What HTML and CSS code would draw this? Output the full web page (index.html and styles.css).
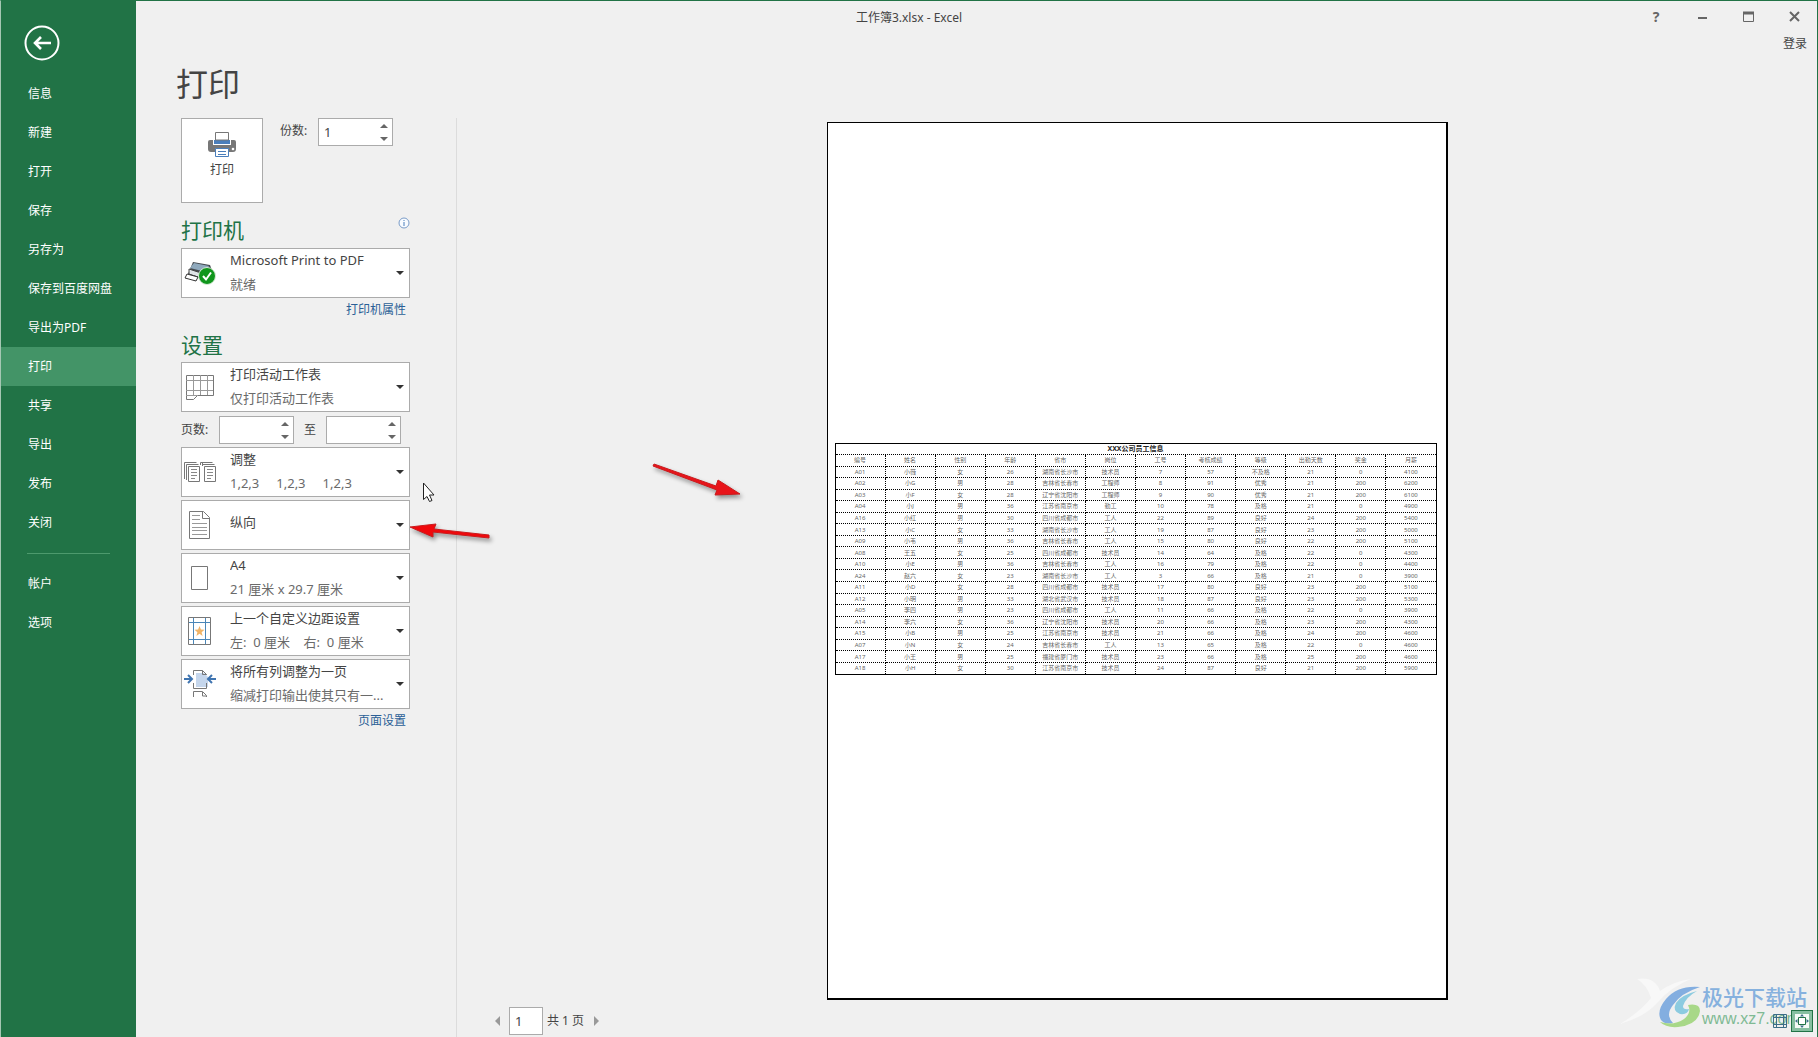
FILE: index.html
```html
<!DOCTYPE html>
<html lang="zh-CN">
<head>
<meta charset="utf-8">
<title>工作簿3.xlsx - Excel</title>
<link rel="stylesheet" href="styles.css">
</head>
<body>
<div class="window">
  <header class="titlebar">
    <span class="doc-title">工作簿3.xlsx - Excel</span>
    <div class="window-controls">
      <button type="button" aria-label="帮助" class="help">?</button>
      <button type="button" aria-label="最小化"><svg width="11" height="11" viewBox="0 0 11 11"><path d="M1 7h9" stroke="#666" stroke-width="2"/></svg></button>
      <button type="button" aria-label="最大化"><svg width="11" height="11" viewBox="0 0 11 11"><path d="M.5 1v9.500h10V1" fill="none" stroke="#666"/><path d="M0 2h11" stroke="#666" stroke-width="3"/></svg></button>
      <button type="button" aria-label="关闭"><svg width="11" height="11" viewBox="0 0 11 11"><path d="M1 1l9 9M10 1l-9 9" stroke="#666" stroke-width="2"/></svg></button>
    </div>
  </header>

  <nav class="sidebar">
    <button type="button" class="back" aria-label="返回"><svg width="36" height="36" viewBox="0 0 36 36" fill="none" stroke="#fff"><circle cx="18" cy="18" r="16.500" stroke-width="2"/><path d="M27 18H11M17 12l-6 6 6 6" stroke-width="2.600"/></svg></button>
    <a href="#">信息</a>
    <a href="#">新建</a>
    <a href="#">打开</a>
    <a href="#">保存</a>
    <a href="#">另存为</a>
    <a href="#">保存到百度网盘</a>
    <a href="#">导出为PDF</a>
    <a href="#" class="active">打印</a>
    <a href="#">共享</a>
    <a href="#">导出</a>
    <a href="#">发布</a>
    <a href="#">关闭</a>
    <hr>
    <a href="#">帐户</a>
    <a href="#">选项</a>
  </nav>

  <div class="page-head">
    <h1>打印</h1>
    <a href="#" class="login">登录</a>
  </div>

  <main class="content">
    <form class="settings">
      <div class="print-row">
        <button type="button" class="print-button">
          <svg width="28" height="26" viewBox="0 0 28 26"><path d="M2 8h24q2 0 2 2v7q0 3-3 3H3q-3 0-3-3v-7q0-2 2-2z" fill="#777"/><path d="M5 7h18v6H5z" fill="#fff"/><path d="M6 8h16v4H6z" fill="#4a7ebb"/><path d="M7.500.5h13V8h-13z" fill="#fff" stroke="#777"/><path d="M7.500 16.500h13v8h-13z" fill="#fff" stroke="#4a7ebb"/><path d="M10 19.500h8M10 22.500h8" stroke="#4a7ebb"/><circle cx="25" cy="17" r="1.300" fill="#fff"/></svg>
          <span>打印</span>
        </button>
        <label for="copies">份数:</label>
        <div class="spin">
          <input id="copies" type="number" value="1" min="1">
          <button type="button" class="up" aria-label="增加份数"></button>
          <button type="button" class="down" aria-label="减少份数"></button>
        </div>
      </div>

      <div class="section-head">
        <h2>打印机</h2>
        <svg width="12" height="12" viewBox="0 0 12 12"><circle cx="6" cy="6" r="5" fill="#f8fbff" stroke="#7a9cc8"/><path d="M6 5v4M6 3v1" stroke="#4a7ebb"/></svg>
      </div>
      <div class="picker">
        <svg class="icon" width="34" height="30" viewBox="0 0 34 30"><path d="M10 4l17 3 3 8-8 7-17-6z" fill="#454b50"/><path d="M11 5l15 3-3 6-16-4z" fill="#8fa9bd"/><path d="M6 11l15 5v5L6 16z" fill="#dfe4e7" stroke="#444"/><path d="M4 16l11 3-2 4-11-3z" fill="#fff" stroke="#333"/><circle cx="24" cy="18" r="8.500" fill="#10961c" stroke="#d8ead8"/><path d="M20 18l3 3.500 5-7" fill="none" stroke="#fff" stroke-width="2"/></svg>
        <select aria-label="打印机"><option>Microsoft Print to PDF</option></select>
        <span class="detail">就绪</span>
      </div>
      <a href="#" class="more">打印机属性</a>

      <div class="section-head"><h2>设置</h2></div>
      <div class="picker">
        <svg class="icon" width="34" height="30" viewBox="0 0 34 30" fill="none" stroke="#777"><path d="M3.500 3.500h27v20h-16l-4 4h-7z" fill="#fff"/><path d="M3 8.500h27M3 18.500h27M10.500 3v20M17.500 3v20M24.500 3v20M3 23.500h11" stroke="#999"/></svg>
        <select aria-label="打印范围"><option>打印活动工作表</option></select>
        <span class="detail">仅打印活动工作表</span>
      </div>
      <div class="range-row">
        <label for="from">页数:</label>
        <div class="spin">
          <input id="from" type="number">
          <button type="button" class="up" aria-label="增加起始页"></button>
          <button type="button" class="down" aria-label="减少起始页"></button>
        </div>
        <label for="to">至</label>
        <div class="spin">
          <input id="to" type="number">
          <button type="button" class="up" aria-label="增加结束页"></button>
          <button type="button" class="down" aria-label="减少结束页"></button>
        </div>
      </div>
      <div class="picker-list">
        <div class="picker">
          <svg class="icon" width="34" height="30" viewBox="0 0 34 30" fill="none" stroke="#777"><path d="M1.500 22V5.500h12M3.500 23V7.500h12M5.500 9.500h11v15h-11zM19.500 5.500h10M19.500 7.500h12M19.500 9V5M21.500 9.500h11v15h-11zM17.500 8V5.500h3"/><path d="M8 12.500h6M8 15.500h6M8 18.500h6M8 21.500h4M24 12.500h6M24 15.500h6M24 18.500h6M24 21.500h4" stroke="#888"/></svg>
          <select aria-label="调整"><option>调整</option></select>
          <span class="detail triple"><span>1,2,3</span><span>1,2,3</span><span>1,2,3</span></span>
        </div>
        <div class="picker single">
          <svg class="icon" width="34" height="30" viewBox="0 0 34 30" fill="none" stroke="#777"><path d="M6.500 1.500h14l6 6v21h-20zM19.500 1.500v7h7"/><path d="M9 5.500h8M9 9.500h8M9 13.500h15M9 17.500h15M9 20.500h15M9 24.500h15" stroke="#999"/></svg>
          <select aria-label="方向"><option>纵向</option></select>
        </div>
        <div class="picker">
          <svg class="icon" width="34" height="30" viewBox="0 0 34 30" fill="#fff" stroke="#777"><path d="M8.500 3.500h16v23h-16z"/></svg>
          <select aria-label="纸张"><option>A4</option></select>
          <span class="detail">21 厘米 x 29.7 厘米</span>
        </div>
        <div class="picker">
          <svg class="icon" width="34" height="30" viewBox="0 0 34 30" fill="none"><path d="M5.500 1.500h22v27h-22z" stroke="#777"/><path d="M10.500 2v26M22.500 2v26M6 6.500h21M6 23.500h21" stroke="#4a86b8"/><path d="M16.500 10l1.400 3.600 3.600.2-2.900 2.400 1 3.800-3.100-2.200-3.100 2.200 1-3.800-2.900-2.400 3.600-.2z" fill="#f0b468"/></svg>
          <select aria-label="边距"><option>上一个自定义边距设置</option></select>
          <span class="detail">左:&nbsp; 0 厘米&nbsp; &nbsp; 右:&nbsp; 0 厘米</span>
        </div>
        <div class="picker">
          <svg class="icon" width="34" height="30" viewBox="0 0 34 30" fill="none"><path d="M13 4h8l4 4v10H13z" fill="#c5d6ec"/><path d="M10.500 6V1.500h9l4 4V6M19.500 1.500v4h4M10.500 14v5.500h13V14M10.500 28v-5.500h9l4 4V28M19.500 23v4h4" stroke="#777"/><path d="M1 10h7M5 6l4 4-4 4M33 10h-7M29 6l-4 4 4 4" stroke="#3f74b0" stroke-width="2"/></svg>
          <select aria-label="缩放"><option>将所有列调整为一页</option></select>
          <span class="detail">缩减打印输出使其只有一...</span>
        </div>
      </div>
      <a href="#" class="more">页面设置</a>
    </form>

    <section class="preview">
      <div class="sheet">
        <table>
          <thead>
            <tr><th colspan="12" class="caption">XXX公司员工信息</th></tr>
            <tr><th>编号</th><th>姓名</th><th>性别</th><th>年龄</th><th>省市</th><th>岗位</th><th>工号</th><th>考核成绩</th><th>等级</th><th>出勤天数</th><th>奖金</th><th>月薪</th></tr>
          </thead>
          <tbody>
            <tr><td>A01</td><td>小薇</td><td>女</td><td>26</td><td>湖南省长沙市</td><td>技术员</td><td>7</td><td>57</td><td>不及格</td><td>21</td><td>0</td><td>4100</td></tr>
            <tr><td>A02</td><td>小G</td><td>男</td><td>28</td><td>吉林省长春市</td><td>工程师</td><td>8</td><td>91</td><td>优秀</td><td>21</td><td>200</td><td>6200</td></tr>
            <tr><td>A03</td><td>小F</td><td>女</td><td>28</td><td>辽宁省沈阳市</td><td>工程师</td><td>9</td><td>90</td><td>优秀</td><td>21</td><td>200</td><td>6100</td></tr>
            <tr><td>A04</td><td>小J</td><td>男</td><td>36</td><td>江苏省南京市</td><td>勤工</td><td>10</td><td>78</td><td>及格</td><td>21</td><td>0</td><td>4900</td></tr>
            <tr><td>A16</td><td>小红</td><td>男</td><td>30</td><td>四川省成都市</td><td>工人</td><td>22</td><td>89</td><td>良好</td><td>24</td><td>200</td><td>5400</td></tr>
            <tr><td>A13</td><td>小C</td><td>女</td><td>33</td><td>湖南省长沙市</td><td>工人</td><td>19</td><td>87</td><td>良好</td><td>23</td><td>200</td><td>5000</td></tr>
            <tr><td>A09</td><td>小韦</td><td>男</td><td>36</td><td>吉林省长春市</td><td>工人</td><td>15</td><td>80</td><td>良好</td><td>22</td><td>200</td><td>5100</td></tr>
            <tr><td>A08</td><td>王五</td><td>女</td><td>25</td><td>四川省成都市</td><td>技术员</td><td>14</td><td>64</td><td>及格</td><td>22</td><td>0</td><td>4300</td></tr>
            <tr><td>A10</td><td>小E</td><td>男</td><td>36</td><td>吉林省长春市</td><td>工人</td><td>16</td><td>79</td><td>及格</td><td>22</td><td>0</td><td>4400</td></tr>
            <tr><td>A24</td><td>赵六</td><td>女</td><td>23</td><td>湖南省长沙市</td><td>工人</td><td>3</td><td>66</td><td>及格</td><td>21</td><td>0</td><td>3900</td></tr>
            <tr><td>A11</td><td>小D</td><td>女</td><td>28</td><td>四川省成都市</td><td>技术员</td><td>17</td><td>80</td><td>良好</td><td>23</td><td>200</td><td>5100</td></tr>
            <tr><td>A12</td><td>小明</td><td>男</td><td>33</td><td>湖北省武汉市</td><td>技术员</td><td>18</td><td>87</td><td>良好</td><td>23</td><td>200</td><td>5300</td></tr>
            <tr><td>A05</td><td>李四</td><td>男</td><td>23</td><td>四川省成都市</td><td>工人</td><td>11</td><td>66</td><td>及格</td><td>22</td><td>0</td><td>3900</td></tr>
            <tr><td>A14</td><td>李六</td><td>女</td><td>36</td><td>辽宁省沈阳市</td><td>技术员</td><td>20</td><td>66</td><td>及格</td><td>23</td><td>200</td><td>4300</td></tr>
            <tr><td>A15</td><td>小B</td><td>男</td><td>25</td><td>江苏省南京市</td><td>技术员</td><td>21</td><td>66</td><td>及格</td><td>24</td><td>200</td><td>4600</td></tr>
            <tr><td>A07</td><td>小N</td><td>女</td><td>24</td><td>吉林省长春市</td><td>工人</td><td>13</td><td>65</td><td>及格</td><td>22</td><td>0</td><td>4600</td></tr>
            <tr><td>A17</td><td>小王</td><td>男</td><td>25</td><td>福建省厦门市</td><td>技术员</td><td>23</td><td>66</td><td>及格</td><td>25</td><td>200</td><td>4600</td></tr>
            <tr><td>A18</td><td>小H</td><td>女</td><td>30</td><td>江苏省南京市</td><td>技术员</td><td>24</td><td>87</td><td>良好</td><td>21</td><td>200</td><td>5900</td></tr>
          </tbody>
        </table>
      </div>
      <div class="pager">
        <button type="button" class="prev" aria-label="上一页"></button>
        <input id="page" type="text" value="1">
        <label for="page">共 1 页</label>
        <button type="button" class="next" aria-label="下一页"></button>
        <div class="view-tools">
          <button type="button" aria-label="显示边距"><svg width="14" height="14" viewBox="0 0 14 14" fill="none" stroke="#3d6e87"><path d="M.5.5h13v13H.5zM3.500 0v14M10.500 0v14M0 3.500h14M0 10.500h14"/></svg></button>
          <button type="button" class="on" aria-label="缩放到页面"><svg width="14" height="14" viewBox="0 0 14 14"><path d="M0 0h14v14H0z" fill="#f4faf6"/><path d="M3.500 3.500h7v7h-7z" fill="#fff" stroke="#217346"/><path d="M7 0l2 2.500H5zM7 14l2-2.500H5zM0 7l2.500-2v4zM14 7l-2.500-2v4z" fill="#3d6e87"/></svg></button>
        </div>
      </div>
    </section>
  </main>

  <div class="watermark">
    <svg width="86" height="60" viewBox="0 0 86 60"><path d="M17 4q18-3 23 12Q54 6 71 4 51 12 38 27 25 42 0 49q20-12 31-26Q27 10 17 4z" fill="#fff" opacity=".5"/><path d="M80 12Q58 10 46 24 36 36 41 45q4 5 12 3-8-8 0-18Q61 18 80 12z" fill="#83aee0"/><path d="M77 16q-16 4-21 12-4 8 4 11 8 1 9-5-6 1-6-3 3-9 14-15z" fill="#8ccbe0"/><path d="M68 30q12-2 12 6-2 14-22 16-12 1-18-5 14 4 24-3 8-6 4-14z" fill="#a8d888"/></svg>
    <div><b>极光下载站</b><span>www.xz7.com</span></div>
  </div>
  <svg class="cursor" width="14" height="20" viewBox="0 0 14 20"><path d="M2.500 1v16.500l3.500-3 2.500 5 2.500-1-2.500-5.500h4.500z" fill="#fff" stroke="#222"/></svg>
  <svg class="note note-sheet" width="104" height="52" viewBox="0 0 104 52"><path d="M5 5l62 22 2-6 22 14-25 1 2-5L4 7z" fill="#e8141a" stroke="#c81a1c"/></svg>
  <svg class="note note-orientation" width="96" height="34" viewBox="0 0 96 34"><path d="M4 8l26-3-2 5 55 6v3l-56-6 0 5z" fill="#f0080c" stroke="#c81a1c"/></svg>
</div>
</body>
</html>
```
FILE: styles.css
```css
* { box-sizing: border-box; }

body {
  margin: 0;
  font: 12px/16px "Noto Sans", "Noto Sans CJK SC", sans-serif;
  color: #444;
  background: #f0f0f0;
}

button, input, select { font: inherit; color: inherit; margin: 0; }
button { padding: 0; border: 0; background: none; }
a { text-decoration: none; color: inherit; }
h1, h2 { margin: 0; font-weight: 400; }
svg { display: block; flex: none; }

.window {
  position: relative;
  display: grid;
  grid-template: 31px 86px 1fr / 135px 1fr;
  min-height: 100vh;
  border: 1px solid #217346;
  border-left-color: #a5c7b3;
  border-bottom: 0;
}

/* Title bar */
.titlebar {
  grid-area: 1 / 1 / 2 / 3;
  display: grid;
  grid-template-columns: 1fr auto 1fr;
  align-items: center;
}
.doc-title { grid-column: 2; padding-top: 2px; }
.window-controls { display: flex; justify-content: flex-end; }
.window-controls button { display: grid; place-items: center; width: 46px; height: 31px; }
.window-controls .help { font-size: 14px; font-weight: 700; color: #666; }

/* Navigation */
.sidebar {
  grid-area: 1 / 1 / 4 / 2;
  display: flex;
  flex-direction: column;
  padding-top: 24px;
  background: #217346;
  color: #fff;
}
.sidebar a { padding: 12px 0 11px 27px; }
.sidebar .active { background: #439467; }
.sidebar .back { width: 36px; margin: 0 0 13px 23px; }
.sidebar hr { width: 83px; margin: 11px 0 10px 26px; border: 0; border-top: 1px solid #4d9a6d; }

.page-head {
  grid-area: 2 / 2;
  display: flex;
  justify-content: space-between;
  padding: 4px 10px 0 40px;
}
.page-head h1 { font-size: 32px; line-height: 48px; margin-top: 24px; }

/* Print settings */
.content { grid-area: 3 / 2; display: flex; }
.settings {
  flex: none;
  width: 321px;
  padding-left: 45px;
  border-right: 1px solid #dcdcdc;
}
.print-row { display: flex; align-items: flex-start; }
.print-button {
  display: flex;
  flex-direction: column;
  align-items: center;
  gap: 4px;
  width: 82px;
  height: 85px;
  padding-top: 13px;
  margin-right: 17px;
  border: 1px solid #ababab;
  background: #fff;
}
.print-row label { width: 38px; padding-top: 5px; }

.spin {
  display: grid;
  grid-template: 1fr 1fr / 1fr 12px;
  width: 75px;
  height: 28px;
  border: 1px solid #ababab;
  background: #fff;
}
.spin input {
  grid-area: 1 / 1 / 3 / 2;
  min-width: 0;
  padding: 0 5px;
  border: 0;
  background: none;
  font-size: 13px;
  appearance: textfield;
}
.spin button { display: grid; place-items: center start; }
.spin button::before { content: ""; border: 4px solid transparent; }
.spin .up::before { border-top: 0; border-bottom-color: #666; }
.spin .down::before { border-bottom: 0; border-top-color: #666; }

.section-head {
  display: flex;
  justify-content: space-between;
  width: 229px;
  height: 45px;
  padding-top: 14px;
}
.section-head h2 { font-size: 21px; line-height: 26px; color: #217346; }
.section-head svg { width: 12px; }

.picker {
  display: grid;
  grid-template: 24px 24px / 1fr;
  width: 229px;
  border: 1px solid #ababab;
  background: #fff;
  font-size: 13px;
}
.picker > * { grid-area: 1 / 1 / 3 / 2; }
.picker select {
  width: 100%;
  padding: 0 24px 26px 48px;
  border: 0;
  background: none;
  appearance: none;
}
.picker.single select { padding-bottom: 6px; }
.picker .icon { align-self: center; margin-left: 1px; }
.picker .detail { grid-area: 2 / 1; padding-left: 48px; line-height: 22px; color: #6a6a6a; pointer-events: none; }
.picker .triple { display: flex; gap: 17px; }
.picker::after {
  content: "";
  grid-area: 1 / 1 / 3 / 2;
  place-self: center end;
  margin-right: 5px;
  border: 4px solid transparent;
  border-top-color: #333;
  border-bottom: 0;
  pointer-events: none;
}
.picker-list { display: grid; gap: 3px; }

.range-row { display: flex; align-items: center; margin: 4px 0 3px; }
.range-row label:first-child { width: 38px; }
.range-row label + .spin + label { width: 32px; text-align: center; }

.more { display: block; width: 225px; margin-top: 4px; text-align: right; color: #2b5f96; }
.more + .section-head { height: 44px; }

/* Preview */
.preview {
  flex: 1;
  display: flex;
  flex-direction: column;
  align-items: center;
  gap: 7px;
  padding: 4px 0 2px;
}
.sheet {
  flex: 1;
  display: flex;
  align-items: center;
  width: 621px;
  padding: 0 9px 4px 7px;
  border: solid #000;
  border-width: 1px 2px 2px 1px;
  background: #fff;
}
.sheet table {
  width: 100%;
  height: 232px;
  table-layout: fixed;
  border-collapse: collapse;
  border: 1px solid #000;
  font-size: 6px;
  line-height: 8px;
  color: #666;
  text-align: center;
}
.sheet tr { height: 11px; }
.sheet thead tr + tr { height: 12px; }
.sheet th, .sheet td { padding: 0; border: 1px dotted #000; font-weight: 400; white-space: nowrap; }
.sheet .caption { font-size: 7px; font-weight: 700; color: #222; }
.sheet tr:first-child .caption { border-top-style: solid; }
.sheet tbody tr:last-child td { border-bottom-style: solid; }
.sheet tr > :first-child { border-left-style: solid; }
.sheet tr > :last-child { border-right-style: solid; }

.pager {
  align-self: stretch;
  display: flex;
  align-items: center;
  height: 28px;
  padding: 0 4px 0 38px;
  position: relative;
  z-index: 2;
}
.pager input { width: 34px; height: 28px; margin: 0 4px 0 9px; padding: 0 5px; border: 1px solid #ababab; background: #fff; font-size: 13px; }
.pager .prev, .pager .next { border: 5px solid transparent; }
.pager .prev { border-left: 0; border-right-color: #999; }
.pager .next { margin-left: 10px; border-right: 0; border-left-color: #999; }
.view-tools { display: flex; align-items: center; gap: 4px; margin-left: auto; }
.view-tools .on { padding: 3px; border: 1px solid #217346; background: #86bfa0; }

/* Overlays */
.watermark {
  position: absolute;
  right: 10px;
  bottom: 2px;
  display: flex;
  align-items: flex-end;
  color: #86b1de;
}
.watermark svg { margin-right: -4px; }
.watermark div { padding-bottom: 7px; }
.watermark b { display: block; font-size: 21px; line-height: 26px; font-weight: 500; }
.watermark span { display: block; font: 16px/18px "Liberation Sans", sans-serif; color: #7fba94; }
.cursor { position: absolute; left: 420px; top: 481px; }
.note { position: absolute; filter: drop-shadow(2px 3px 2px #0006); pointer-events: none; }
.note-sheet { left: 648px; top: 458px; }
.note-orientation { left: 405px; top: 518px; }
```
